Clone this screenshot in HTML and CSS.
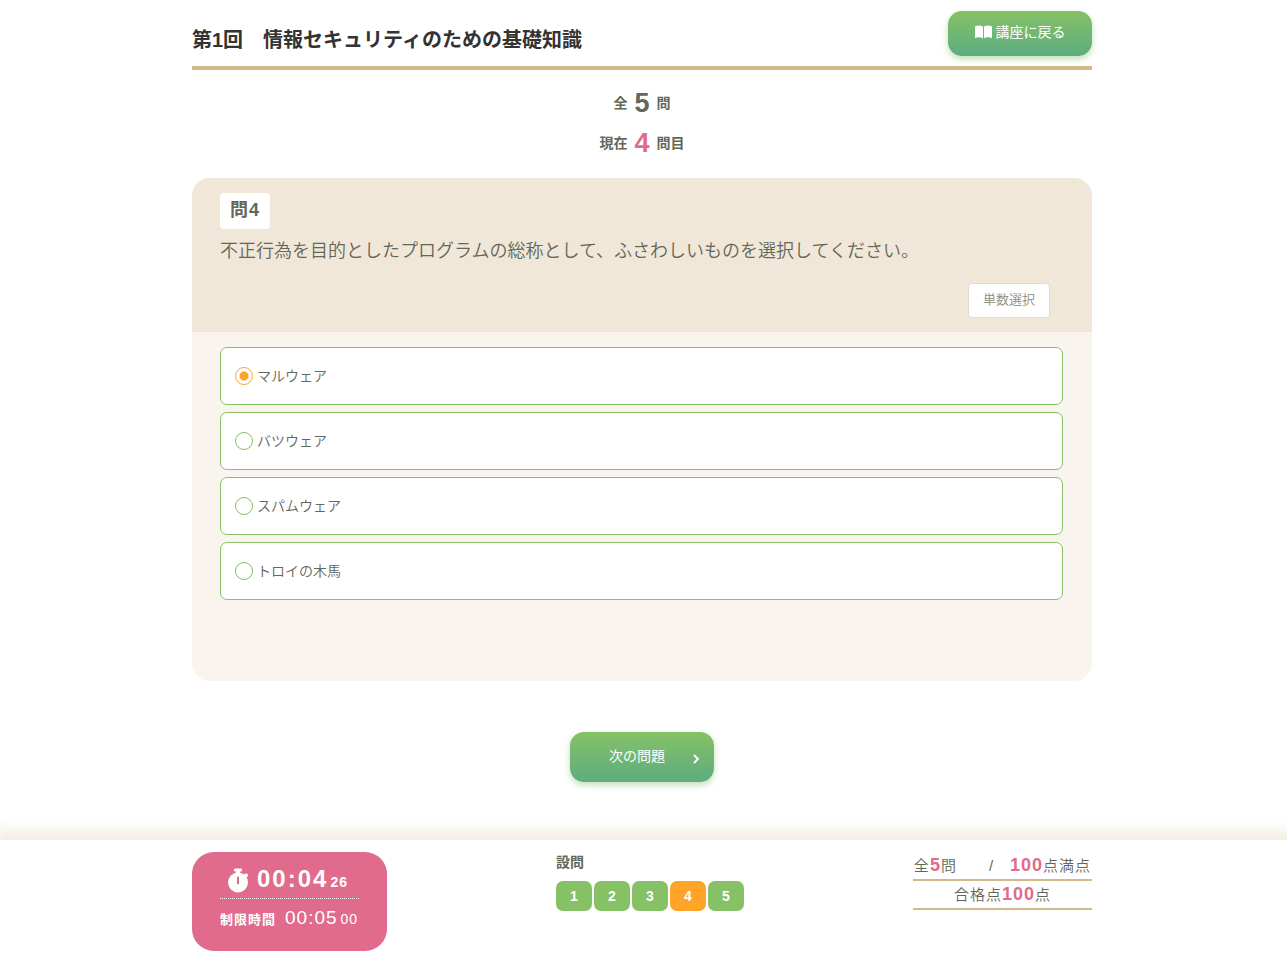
FILE: index.html
```html
<!DOCTYPE html>
<html lang="ja">
<head>
  <meta charset="UTF-8">
  <meta name="viewport" content="width=device-width, initial-scale=1.0">
  <title>第1回　情報セキュリティのための基礎知識</title>
  <link rel="stylesheet" href="styles.css">
</head>
<body>

  <div class="page">
    <header class="header">
      <h1>第1回　情報セキュリティのための基礎知識</h1>
      <a href="#" class="btn btn-back">
        <svg class="icon-book" viewBox="0 0 17 14" aria-hidden="true">
          <path d="M0 1.500C2.400.2 6 .2 8 1.600V13.200C6 12 2.400 12 0 13zM9 1.600C11 .2 14.600.2 17 1.500V13C14.600 12 11 12 9 13.200z" fill="#fff"/>
        </svg>
        講座に戻る
      </a>
    </header>

    <main>
      <div class="count">
        <p>全<strong>5</strong>問</p>
        <p>現在<strong class="pink">4</strong>問目</p>
      </div>

      <form id="quiz">
        <section class="question">
          <div class="question-head">
            <h2>問4</h2>
            <p class="question-text">不正行為を目的としたプログラムの総称として、ふさわしいものを選択してください。</p>
            <span class="question-type">単数選択</span>
          </div>
          <div class="answers">
            <label class="answer"><input type="radio" name="answer" value="1" checked>マルウェア</label>
            <label class="answer"><input type="radio" name="answer" value="2">バツウェア</label>
            <label class="answer"><input type="radio" name="answer" value="3">スパムウェア</label>
            <label class="answer"><input type="radio" name="answer" value="4">トロイの木馬</label>
          </div>
        </section>

        <button type="submit" class="btn btn-next">
          次の問題
          <svg class="icon-next" viewBox="0 0 6 10" aria-hidden="true">
            <path d="M1 1l4 4-4 4" fill="none" stroke="#fff" stroke-width="1.800"/>
          </svg>
        </button>
      </form>
    </main>
  </div>

  <footer class="footer">
    <div class="footer-inner">
      <div class="timer">
        <div class="timer-now">
          <svg class="icon-watch" viewBox="0 0 21 25" aria-hidden="true">
            <path d="M6 1.500Q6 .5 7 .5h6q1 0 1 1v1q0 1-1 1h-.8v2.500H7.800V3.500H7q-1 0-1-1z" fill="#fff"/>
            <path d="M15 7l2-1.600 3 .6-.4 2.800-1.800 1.200z" fill="#fff"/>
            <circle cx="10" cy="14.500" r="10" fill="#fff"/>
            <path d="M10 9.500v6" stroke="#e16b8c" stroke-width="2" stroke-linecap="round"/>
          </svg>
          <span class="time">00:04</span><span class="sec">26</span>
        </div>
        <div class="timer-limit">
          <span class="label">制限時間</span>
          <span class="time">00:05</span><span class="sec">00</span>
        </div>
      </div>

      <nav class="steps" aria-label="設問">
        <p>設問</p>
        <div class="steps-list">
          <button type="button">1</button>
          <button type="button">2</button>
          <button type="button">3</button>
          <button type="button" class="current">4</button>
          <button type="button">5</button>
        </div>
      </nav>

      <div class="score">
        <p>全<strong>5</strong>問　　/　<strong>100</strong>点満点</p>
        <p>合格点<strong>100</strong>点</p>
      </div>
    </div>
  </footer>

</body>
</html>
```
FILE: styles.css
```css
* { box-sizing: border-box; }
body {
  font-family: "Liberation Sans", "Noto Sans CJK JP", sans-serif;
  font-size: 14px;
  margin: 0;
  color: #62675a;
  background: #fff;
  min-height: 100vh;
  display: flex;
  flex-direction: column;
}
h1, h2, p { margin: 0; }
button {
  font-family: inherit;
  border: none;
  cursor: pointer;
}

/* layout */
.page,
.footer {
  padding-right: 3px;
}
.header,
main,
.footer-inner {
  max-width: 900px;
  margin: 0 auto;
}

/* header */
.header {
  display: flex;
  justify-content: space-between;
  align-items: center;
  padding: 11px 0 10px;
  border-bottom: 4px solid #d5b88a;
}
.header h1 {
  font-size: 20px;
  line-height: 32px;
  padding-top: 12px;
  color: #333;
}
.btn {
  display: flex;
  align-items: center;
  width: 144px;
  border-radius: 14px;
  background: linear-gradient(#86c166, #5dac81);
  box-shadow: 0 3px 6px rgba(134, 193, 102, 0.5);
  color: #fff;
  font-size: 14px;
  line-height: 20px;
  text-decoration: none;
}
.btn-back {
  justify-content: center;
  gap: 4px;
  height: 45px;
  padding-bottom: 3px;
}
.icon-book {
  width: 17px;
  height: 14px;
}

/* question count */
.count {
  padding-top: 13px;
  font-weight: bold;
}
.count p {
  display: flex;
  justify-content: center;
  align-items: center;
  line-height: 40px;
}
.count strong {
  font-size: 27px;
  margin: 0 7px;
}
.pink,
.score strong {
  color: #e16b8c;
}

/* question */
.question {
  margin-top: 15px;
  border-radius: 18px;
  overflow: hidden;
  background: #f9f4ee;
}
.question-head {
  display: flex;
  flex-direction: column;
  align-items: flex-start;
  padding: 15px 28px 14px;
  background: #f0e7d8;
}
.question-head h2 {
  padding: 5px 10px 7px;
  border-radius: 4px;
  background: #fff;
  font-size: 18px;
  line-height: 24px;
  letter-spacing: 1px;
}
.question-text {
  margin: 8px 0 18px;
  font-size: 18px;
  font-weight: 350;
  line-height: 28px;
}
.question-type {
  align-self: flex-end;
  margin-right: 14px;
  padding: 6px 14px 7px;
  border: 1px solid #dcdcd4;
  border-radius: 4px;
  background: #fff;
  color: #8a8d80;
  font-size: 13px;
  font-weight: 350;
  line-height: 20px;
}
.answers {
  display: flex;
  flex-direction: column;
  gap: 7px;
  padding: 15px 29px 81px 28px;
}
.answer {
  display: flex;
  align-items: center;
  gap: 4px;
  padding: 18px 14px;
  border: 1px solid #86c166;
  border-radius: 7px;
  background: #fff;
  font-weight: 350;
  line-height: 20px;
  cursor: pointer;
}
.answer input {
  appearance: none;
  width: 18px;
  height: 18px;
  margin: 0;
  border: 1px solid #86c166;
  border-radius: 50%;
}
.answer input:checked {
  border-color: #ffa428;
  background: radial-gradient(circle, #ffa428 4px, #fff 5px);
}
.btn-next {
  justify-content: space-between;
  height: 50px;
  margin: 51px auto;
  padding: 0 15px 2px 39px;
}
.icon-next {
  width: 6px;
  height: 10px;
  margin-top: 5px;
}

/* footer */
.footer {
  margin-top: auto;
  background: #fff;
  box-shadow: 0 -5px 12px 5px rgba(213, 184, 138, 0.25);
}
.footer-inner {
  display: flex;
  justify-content: space-between;
  align-items: flex-start;
  padding: 12px 0 14px;
}
.timer {
  width: 195px;
  padding: 11px 28px 17px;
  border-radius: 22px;
  background: #e16b8c;
  color: #fff;
}
.timer-now,
.timer-limit {
  display: flex;
  align-items: baseline;
  white-space: nowrap;
}
.timer-now {
  padding-left: 8px;
  border-bottom: 1px dotted #fff;
  font-weight: bold;
  line-height: 32px;
}
.timer-now .time {
  margin: 0 2px 0 8px;
  font-size: 24px;
  letter-spacing: 2px;
}
.timer-now .sec {
  font-size: 14px;
  letter-spacing: 1px;
}
.icon-watch {
  width: 21px;
  height: 25px;
  align-self: center;
}
.timer-limit {
  padding-top: 5px;
  line-height: 28px;
  letter-spacing: 1px;
}
.timer-limit .label {
  font-size: 13px;
  font-weight: bold;
}
.timer-limit .time {
  margin: 0 3px 0 9px;
  font-size: 19px;
}
.timer-limit .sec {
  font-size: 14px;
}

.steps p {
  font-weight: bold;
  line-height: 20px;
}
.steps-list {
  display: flex;
  gap: 2px;
  margin-top: 9px;
}
.steps-list button {
  width: 36px;
  height: 30px;
  padding: 0;
  border-radius: 7px;
  background: #86c166;
  color: #fff;
  font-size: 14px;
  font-weight: bold;
}
.steps-list .current {
  background: #ffa428;
}

.score {
  width: 179px;
  font-size: 15px;
  font-weight: 350;
  letter-spacing: 1px;
  text-align: center;
  white-space: nowrap;
}
.score p {
  border-bottom: 2px solid #d5b88a;
  line-height: 27px;
}
.score strong {
  font-size: 18px;
  font-weight: bold;
  line-height: 20px;
}
```
